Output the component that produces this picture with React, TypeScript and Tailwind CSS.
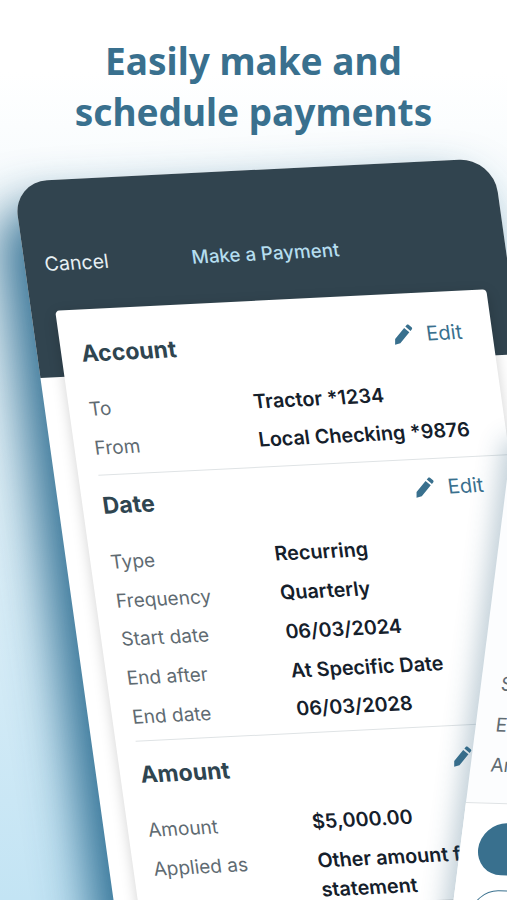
const Pencil = ({ className }: { className: string }) => (
  <svg viewBox="0 0 24 24" className={className} fill="currentColor">
    <path d="M2 22.500l.9-6.300L14.300 4.800l5 5L7.900 21.200 2 22.500zM15.800 3.300l1.700-1.700c.6-.6 1.500-.6 2.100 0l2.900 2.900c.6.6.6 1.500 0 2.100l-1.700 1.700-5-5z" />
  </svg>
);

const Row = ({ label, value }: { label: string; value: string }) => (
  <div className="flex h-[38.8px] items-center">
    <span className="w-[164px] shrink-0 text-[19px] text-[#5f6b72]">{label}</span>
    <span className="text-[19.700px] font-semibold whitespace-nowrap text-[#15202b]">{value}</span>
  </div>
);

const Heading = ({ title }: { title: string }) => (
  <div className="flex h-[44px] items-center justify-between pr-[30px]">
    <span className="text-[23px] font-bold text-[#2f4550]">{title}</span>
    <span className="-mt-[6px] flex items-center gap-[12px] text-[20px] text-[#39708e]">
      <Pencil className="h-[22px] w-[22px]" />
      Edit
    </span>
  </div>
);

export default function App() {
  return (
    <div className="relative h-[900px] w-[507px] overflow-hidden bg-gradient-to-b from-white from-[8%] via-[#e6f3f9] via-[45%] to-[#c3e4f4] font-['Inter',sans-serif]">
      <h1 className="pt-[35px] text-center font-['Noto_Sans',sans-serif] text-[37px] leading-[51px] font-bold text-[#39708e]">
        Easily make and
        <br />
        schedule payments
      </h1>

      <div className="absolute top-[182px] left-[13px] flex h-[900px] w-[480px] origin-top-left [transform:matrix(1,-0.05,0.14,1,0,0)] flex-col rounded-t-[34px] bg-white shadow-[-22px_26px_50px_rgba(20,90,130,0.85)]">
        <div className="flex h-[196px] shrink-0 flex-col rounded-t-[34px] bg-[#31444f] px-[20px] pt-[69px]">
          <div className="flex items-center">
            <span className="w-[147px] text-[19.500px] text-[#e8f0f4]">Cancel</span>
            <span className="text-[18.700px] font-medium text-[#b5deef]">Make a Payment</span>
          </div>
        </div>
        <div className="absolute top-[130px] left-[24px] w-[431px] rounded-[4px] bg-white pt-[22px] pl-[20px] shadow-[0_4px_14px_rgba(0,0,0,0.18)]">
          <Heading title="Account" />
          <div className="mt-[15px]">
            <Row label="To" value="Tractor *1234" />
            <Row label="From" value="Local Checking *9876" />
          </div>
          <div className="mt-[6px] border-t border-[#dfe3e5] pt-[9px]">
            <Heading title="Date" />
            <div className="mt-[15px]">
              <Row label="Type" value="Recurring" />
              <Row label="Frequency" value="Quarterly" />
              <Row label="Start date" value="06/03/2024" />
              <Row label="End after" value="At Specific Date" />
              <Row label="End date" value="06/03/2028" />
            </div>
          </div>
          <div className="mt-[3px] border-t border-[#dfe3e5] pt-[12px]">
            <Heading title="Amount" />
            <div className="mt-[14px]">
              <Row label="Amount" value="$5,000.00" />
              <Row label="Applied as" value="Other amount for" />
              <div className="-mt-[5px] pl-[164px] text-[19.700px] font-semibold text-[#15202b]">statement</div>
            </div>
          </div>
        </div>
      </div>

      <div className="absolute top-[440px] left-[512px] h-[700px] w-[300px] origin-top-left [transform:matrix(1,0.03,-0.127,1,0,0)] bg-[#fcfdfe] shadow-[-8px_0_24px_rgba(40,90,120,0.3)]">
        <div className="pt-[230px] pl-[20px] text-[19px] text-[#5f6b72]">
          <div className="h-[40.5px]">Start date</div>
          <div className="h-[40.5px]">End date</div>
          <div className="h-[40.5px]">Amount</div>
        </div>
        <div className="mt-[10px] border-t border-[#dfe3e5] bg-white px-[18px] pt-[19px]">
          <div className="h-[52px] rounded-full bg-[#39708e]" />
          <div className="mt-[15px] h-[52px] rounded-full border border-[#39708e]" />
        </div>
      </div>
    </div>
  );
}
